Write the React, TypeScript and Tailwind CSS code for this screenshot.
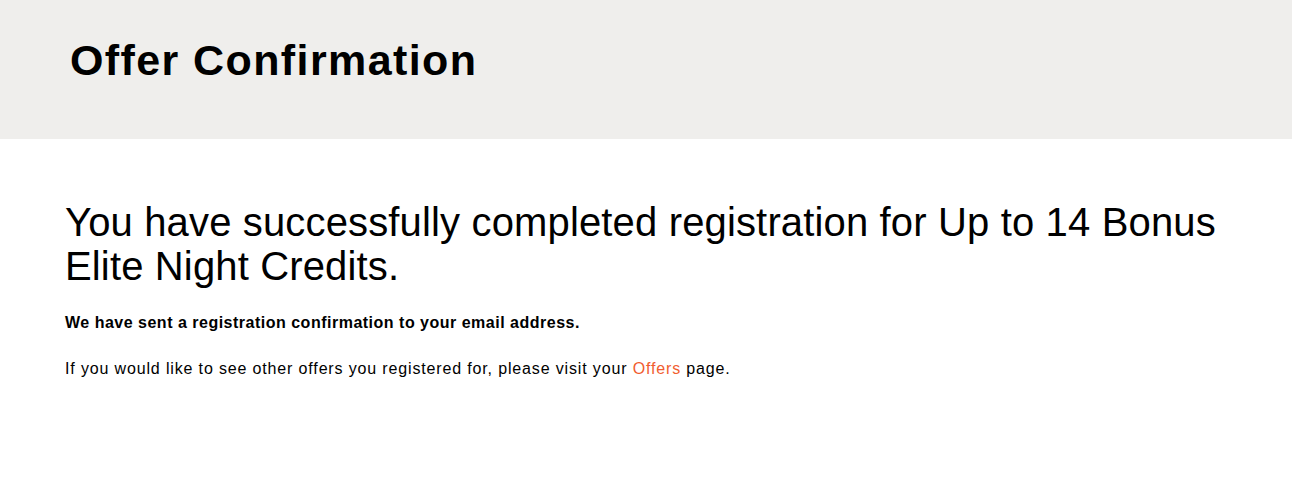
const App = () => {
  return (
    <div className="min-h-[482px] bg-white font-['Liberation_Sans',Arial,sans-serif] text-black">
      <header className="h-[139px] bg-[#efeeec] px-[70px] pt-[36px]">
        <h1 className="text-[43px] font-bold leading-[48px] tracking-[1.4px]">Offer Confirmation</h1>
      </header>
      <main className="px-[65px] pt-[61px]">
        <h2 className="text-[40px] leading-[44px] tracking-[0.15px]">
          You have successfully completed registration for Up to 14 Bonus Elite Night Credits.
        </h2>
        <p className="mt-[24px] text-[16px] font-bold leading-[22px] tracking-[0.5px]">
          We have sent a registration confirmation to your email address.
        </p>
        <p className="mt-[24px] text-[16px] leading-[22px] tracking-[0.85px]">
          If you would like to see other offers you registered for, please visit your{' '}
          <a href="#" className="text-[#f15d2f]">Offers</a> page.
        </p>
      </main>
    </div>
  )
}

export default App
